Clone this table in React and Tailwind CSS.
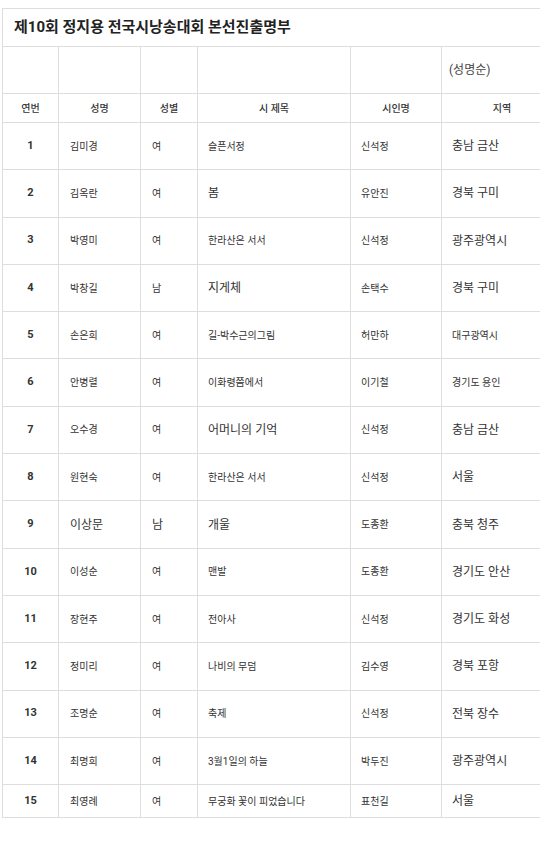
const rows = [
  { no: 1, name: '김미경', sex: '여', title: '슬픈서정', poet: '신석정', region: '충남 금산' },
  { no: 2, name: '김옥란', sex: '여', title: '봄', titleBig: true, poet: '유안진', region: '경북 구미' },
  { no: 3, name: '박영미', sex: '여', title: '한라산은 서서', poet: '신석정', region: '광주광역시' },
  { no: 4, name: '박창길', sex: '남', title: '지게체', titleBig: true, poet: '손택수', region: '경북 구미' },
  { no: 5, name: '손은희', sex: '여', title: '길-박수근의그림', poet: '허만하', region: '대구광역시', regionSmall: true },
  { no: 6, name: '안병렬', sex: '여', title: '이화령쯤에서', poet: '이기철', region: '경기도 용인', regionSmall: true },
  { no: 7, name: '오수경', sex: '여', title: '어머니의 기억', titleBig: true, poet: '신석정', region: '충남 금산' },
  { no: 8, name: '원현숙', sex: '여', title: '한라산은 서서', poet: '신석정', region: '서울' },
  { no: 9, name: '이상문', nameBig: true, sex: '남', title: '개울', titleBig: true, poet: '도종환', region: '충북 청주' },
  { no: 10, name: '이성순', sex: '여', title: '맨발', poet: '도종환', region: '경기도 안산' },
  { no: 11, name: '장현주', sex: '여', title: '전아사', poet: '신석정', region: '경기도 화성' },
  { no: 12, name: '정미리', sex: '여', title: '나비의 무덤', poet: '김수영', region: '경북 포항' },
  { no: 13, name: '조명순', sex: '여', title: '축제', poet: '신석정', region: '전북 장수' },
  { no: 14, name: '최명희', sex: '여', title: '3월1일의 하늘', poet: '박두진', region: '광주광역시' },
  { no: 15, name: '최영례', sex: '여', title: '무궁화 꽃이 피었습니다', poet: '표천길', region: '서울' },
];

const td = 'border border-[#dedede] align-middle';

export default function App() {
  return (
    <div
      className="w-[540px] h-[846px] overflow-hidden bg-white text-[#333]"
      style={{ fontFamily: "Roboto, 'Noto Sans CJK KR', sans-serif" }}
    >
      <div className="pt-2 pl-[2px]">
        <table className="table-fixed border-collapse w-[560px]">
          <colgroup>
            <col className="w-[56px]" />
            <col className="w-[82px]" />
            <col className="w-[57px]" />
            <col className="w-[153px]" />
            <col className="w-[91px]" />
            <col className="w-[121px]" />
          </colgroup>
          <tbody>
            <tr className="h-[38px]">
              <td colSpan={6} className={`${td} pl-[11px] text-[15px] font-bold text-[#222]`}>
                제10회 정지용 전국시낭송대회 본선진출명부
              </td>
            </tr>
            <tr className="h-[47px]">
              <td className={td}></td>
              <td className={td}></td>
              <td className={td}></td>
              <td className={td}></td>
              <td className={td}></td>
              <td className={`${td} pl-[7px] text-[12px] text-[#444]`}>(성명순)</td>
            </tr>
            <tr className="h-[29px] text-[10px] font-medium text-center text-[#333]">
              <td className={td}>연번</td>
              <td className={td}>성명</td>
              <td className={td}>성별</td>
              <td className={td}>시 제목</td>
              <td className={td}>시인명</td>
              <td className={td}>지역</td>
            </tr>
            {rows.map((r) => (
              <tr key={r.no} className={r.no === 15 ? 'h-[33px]' : 'h-[47.3px]'}>
                <td className={`${td} text-center text-[11px] font-bold`}>{r.no}</td>
                <td className={`${td} pl-[11px] ${r.nameBig ? 'text-[12px]' : 'text-[10px]'}`}>{r.name}</td>
                <td className={`${td} pl-[11px] ${r.nameBig ? 'text-[12px]' : 'text-[10px]'}`}>{r.sex}</td>
                <td className={`${td} pl-[10px] ${r.titleBig ? 'text-[12px]' : 'text-[10px]'}`}>{r.title}</td>
                <td className={`${td} pl-[10px] text-[10px]`}>{r.poet}</td>
                <td className={`${td} pl-[10px] ${r.regionSmall ? 'text-[10px]' : 'text-[12px]'}`}>{r.region}</td>
              </tr>
            ))}
          </tbody>
        </table>
      </div>
    </div>
  );
}
